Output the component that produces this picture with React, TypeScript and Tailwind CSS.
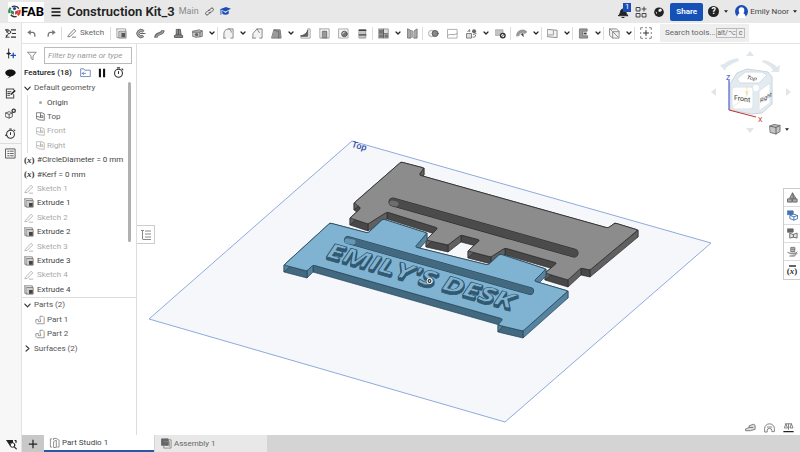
import React from 'react';

type Point = [number, number];

const Icon: React.FC<{ children: React.ReactNode; className?: string }> = ({ children, className = 'size-3' }) => (
  <svg
    viewBox="0 0 12 12"
    className={`shrink-0 ${className}`}
    fill="none"
    stroke="currentColor"
    strokeLinecap="round"
    strokeLinejoin="round"
    aria-hidden="true"
  >
    {children}
  </svg>
);

const toolIcons: Record<string, React.ReactNode> = {
  Extrude: (
    <>
      <path d="M1 1h9.500v2M1 1v9.500h2" stroke="#999" />
      <path d="M3.500 3.500H11V11H3.500z" fill="#c4c4c4" stroke="#888" />
      <path d="M6 5.500h4v4.500H6z" fill="#555" stroke="none" />
    </>
  ),
  Revolve: (
    <>
      <path d="M9.500 2.500A4.600 4.600 0 1 0 9.500 9.500L8 7.800A2.200 2.200 0 1 1 8 4.300z" fill="#aaa" stroke="#666" />
      <path d="M6 6h5" stroke="#555" />
    </>
  ),
  Sweep: (
    <>
      <path d="M2 10.500C2 4.500 9 8 10 2.500" stroke="#666" strokeWidth="3.600" strokeLinecap="butt" />
      <path d="M2.500 10C3 5 9 8 9.500 3" stroke="#999" strokeWidth="1.800" />
    </>
  ),
  Loft: <path d="M4 1.500h4l.8 6 1.700.8v2h-9v-2l1.700-.8zM3.200 7.500h5.600M6 2v5" fill="#8c8c8c" stroke="#555" />,
  Thicken: (
    <>
      <path d="M.7 3.500l7-1.500 3.500 1.200v6l-7 1L.7 9z" fill="#c4c4c4" stroke="#777" />
      <path d="M.7 4.500h8v5M9 4.500l2-1.300" stroke="#666" />
      <circle cx="5" cy="7.200" r="1.800" fill="#666" stroke="none" />
    </>
  ),
  Fillet: <path d="M1 11V6a5 5 0 0 1 5-5h5v10H8.500M1 11h2M6 1c2 0 3 1.500 3 3.500" stroke="#808080" fill="#f2f2f2" />,
  Chamfer: <path d="M1 11V6l4.500-5H11v10H8.500M1 11h3M5.500 1l2.500 4" stroke="#808080" fill="#f2f2f2" />,
  Draft: (
    <>
      <path d="M3.500 2h6.500l1 9H1z" fill="#999" stroke="#777" />
      <path d="M3.500 2 8.500 4v7" stroke="#666" />
    </>
  ),
  Rib: (
    <>
      <path d="M8.500 1H11v10H1V9h4" stroke="#999" />
      <path d="M1 8.500C5 8 8 5 8.500 2v7H3z" fill="#666" stroke="#555" />
    </>
  ),
  Shell: (
    <>
      <path d="M1 1h10v10H8.500M1 1v10h2" stroke="#999" />
      <path d="M4 3.500h4.500V11H4z" fill="#999" stroke="#666" />
    </>
  ),
  Hole: (
    <>
      <path d="M1 1h10v10H1z" fill="#f2f2f2" stroke="#aaa" />
      <circle cx="7" cy="6.500" r="3" fill="#777" stroke="#555" />
      <path d="M5 6.500a2 2 0 0 1 2-2" stroke="#ddd" />
    </>
  ),
  Thread: (
    <>
      <path d="M2.500 2h7v9h-7z" fill="#c4c4c4" stroke="#999" />
      <path d="M2.500 2.500h7M2.500 7.500h7" stroke="#444" strokeWidth="1.600" />
    </>
  ),
  Pattern: (
    <>
      <path d="M.7 1h10.500v10H.7z" fill="#ddd" stroke="#999" />
      <path d="M1 1.500h4.500v4H1zM1 7h4.500v3.500H1zM7 7h4v3.500H7z" fill="#777" stroke="none" />
      <path d="M6 1.500V10.500M1.500 6.300h9" stroke="#555" />
    </>
  ),
  Mirror: (
    <>
      <path d="M1 1 4.500 3v8H1zM8 3l3-2v10H8z" fill="#aaa" stroke="#777" />
      <path d="M4.500 3h1.500v7L8 11" stroke="#999" />
    </>
  ),
  Boolean: (
    <>
      <circle cx="4" cy="6" r="3.500" fill="#f2f2f2" stroke="#aaa" />
      <circle cx="7.800" cy="6" r="3.300" fill="#888" stroke="#555" />
    </>
  ),
  Split: (
    <>
      <path d="M1 1.500h10V11H1z" stroke="#aaa" />
      <path d="M1 8c3-2.500 5 1 10-2" stroke="#999" />
    </>
  ),
  Transform: (
    <>
      <path d="M2 4 4 1.500V4M1 6h5v5H1z" fill="#ddd" stroke="#777" />
      <circle cx="8.800" cy="3.500" r="2.200" fill="#666" stroke="none" />
      <path d="M8 7l3-1M7.500 10c1.500.5 3-.5 3-2" stroke="#666" />
    </>
  ),
  'Delete face': (
    <>
      <path d="M.7 2h8v6h-8z" fill="#c4c4c4" stroke="#aaa" />
      <circle cx="8.500" cy="8.300" r="2.500" fill="#fff" stroke="#333" strokeWidth="1.500" />
      <path d="M7 9.800l3-3" stroke="#333" />
    </>
  ),
  Surface: (
    <>
      <path d="M2 9A5 5 0 0 1 11 5.500" stroke="#999" strokeWidth="3.500" strokeLinecap="butt" />
      <path d="M5 6.500l3-1 .5 4.500z" fill="#444" stroke="none" />
    </>
  ),
  Plane: (
    <>
      <path d="M.7 1.500 11 2.500v8L.7 9.500z" fill="#f2f2f2" stroke="#888" />
      <path d="M1 7.500h6V3" stroke="#999" />
    </>
  ),
  'Sheet metal': (
    <>
      <path d="M2 1h8v2.500H5v5h5.500V11H2z" fill="#999" stroke="#777" />
      <path d="M6 5h3.500v2H6z" fill="#444" stroke="none" />
    </>
  ),
  Frame: (
    <>
      <path d="M1 1h7l3 2.500V11H4L1 8.500z" fill="#f2f2f2" stroke="#888" />
      <path d="M4 11V4h7M1 1l3 3 6 6" stroke="#888" />
    </>
  ),
};

// '|' is a divider, 'v' opens the flyout of the tool before it
const toolbar = [
  'Extrude', 'Revolve', 'Sweep', 'Loft', 'Thicken', 'v', '|',
  'Fillet', 'v', 'Chamfer', 'Draft', 'v', 'Rib', 'Shell', 'Hole', 'Thread', '|',
  'Pattern', 'v', 'Mirror', '|',
  'Boolean', 'Split', 'Transform', 'v', 'Delete face', '|',
  'Surface', 'v', '|', 'Plane', 'v', '|', 'Sheet metal', 'v', '|', 'Frame', 'v', '|',
];

const PencilIcon = () => (
  <Icon className="size-[10px]">
    <path d="M2 8.500 8.500 1.500l2 2L4 10l-2.500.5zM6.500 11h4" stroke="currentColor" />
  </Icon>
);

const ExtrudeIcon = () => (
  <Icon className="size-[10px]">
    <path d="M1 1h9v2M1 1v9h2" stroke="#777" />
    <path d="M3 3h8v8H3z" fill="#ccc" stroke="#777" />
    <path d="M6 6h4.500v4.500H6z" fill="#444" stroke="none" />
  </Icon>
);

const PlaneIcon = () => (
  <Icon className="size-[9px]">
    <path d="M1 1h7l3 1.500V11L4 10.500 1 9zM1 6l5 1V2M6 7l3 .5V5H6" />
  </Icon>
);

const VariableIcon = () => (
  <span className="font-['Liberation_Serif',serif] text-[9px] leading-none font-bold text-[#333]">
    (<i>x</i>)
  </span>
);

const PartIcon = () => (
  <Icon className="size-[10px]">
    <path d="M6 4V1.500h3.500l1.500 1.500v7.500H2.500L1 9V5.500h3V8h2.500z" stroke="#888" />
  </Icon>
);

const Chevron: React.FC<{ open?: boolean }> = ({ open = true }) => (
  <Icon className="size-[7px]">
    <path d={open ? 'M1.500 3.500 6 8.500l4.500-5' : 'M3.500 1.500l5 4.500-5 4.500'} stroke="#333" strokeWidth="2" />
  </Icon>
);

const features = [
  { kind: 'variable', label: '#CircleDiameter = 0 mm' },
  { kind: 'variable', label: '#Kerf = 0 mm' },
  { kind: 'sketch', label: 'Sketch 1' },
  { kind: 'extrude', label: 'Extrude 1' },
  { kind: 'sketch', label: 'Sketch 2' },
  { kind: 'extrude', label: 'Extrude 2' },
  { kind: 'sketch', label: 'Sketch 3' },
  { kind: 'extrude', label: 'Extrude 3' },
  { kind: 'sketch', label: 'Sketch 4' },
  { kind: 'extrude', label: 'Extrude 4' },
];

const Header = () => (
  <header className="flex h-[23px] shrink-0 items-center bg-[#e8e8e8] pl-2 text-[#222]">
    <a href="#home" className="flex h-5 w-9 items-center bg-white" aria-label="FAB home">
      <svg viewBox="0 0 24 24" className="size-[13px] shrink-0" fill="none" strokeWidth="4">
        <path d="M3 15A9.500 9.500 0 0 1 5 5" stroke="#2d8a57" />
        <path d="M7 3.500a10 10 0 0 1 13 3" stroke="#333" strokeWidth="2.500" />
        <path d="M21 9a9.500 9.500 0 0 1-3 10" stroke="#d33a3a" />
        <path d="M16 21a10 10 0 0 1-11-3" stroke="#333" strokeWidth="2.500" />
        <path d="M5 9l6 3v6l-6-3z" fill="#2d8a57" />
        <path d="M13 12l6-3v6l-6 3z" fill="#d33a3a" />
        <circle cx="12" cy="6.500" r="3" fill="#2b4f9c" />
      </svg>
      <span className="text-[13px] leading-none font-bold text-black">FAB</span>
    </a>
    <button className="ml-[6px]" aria-label="Menu">
      <Icon>
        <path d="M1.500 2.500h9M1.500 6h9M1.500 9.500h9" stroke="#111" strokeWidth="1.400" strokeLinecap="butt" />
      </Icon>
    </button>
    <h1 className="ml-[5px] text-[13px] leading-none font-semibold whitespace-nowrap">Construction Kit_3</h1>
    <span className="ml-1 text-[9px] text-[#888]">Main</span>
    <button className="ml-[6px]" aria-label="Copy link">
      <Icon className="size-[9px]">
        <path d="M5.500 8.500 4 10.300a2 2 0 0 1-2.800-2.800L4 4.700a2 2 0 0 1 2.800 0M6.500 3.500 8 1.700a2 2 0 0 1 2.800 2.800L8 7.300a2 2 0 0 1-2.800 0" stroke="#555" strokeWidth="1.300" />
      </Icon>
    </button>
    <button className="ml-[6px]" aria-label="Learning center">
      <Icon className="size-[11px]">
        <path d="M0 3.500 6.500 1 12 3 6 6z" fill="#1b4db8" stroke="none" />
        <path d="M2.500 5 6 7.500 9.500 5v3.500c-2 1.500-5 1.500-7 0z" fill="#1b4db8" stroke="none" />
        <path d="M1 4v5" stroke="#1b4db8" />
      </Icon>
    </button>

    <div className="ml-auto flex items-center">
      <button className="relative" aria-label="1 notification">
        <Icon>
          <path d="M1.500 9.500c1.500-1 1.500-2 2-4 .4-1.600 1.200-2.500 2.700-2.500S8.500 4 8.800 5.500c.4 2 .6 3 2 4z" fill="#222" stroke="#222" />
          <path d="M5 11.500h2" stroke="#222" />
        </Icon>
        <span className="absolute -top-[3px] left-[6px] flex h-[9px] w-2 items-center justify-center bg-[#1b4db8] text-[8px] leading-none text-white">1</span>
      </button>
      <button className="ml-[6px]" aria-label="App store">
        <Icon>
          <path d="M1.500 1.500h3.500v3.500H1.500zM1.500 7.500h3.500V11H1.500zM7.500 7.500H11V11H7.500zM9 1v4M7 3h4" stroke="#444" />
        </Icon>
      </button>
      <button className="ml-[6px]" aria-label="Public document">
        <Icon>
          <circle cx="6" cy="6.200" r="4.800" fill="#222" stroke="none" />
          <path d="M5.500 3.500 8 2.500l1 2-2 1.500-1.500-.5zM2.500 5.500l1.500 1v2z" fill="#eee" stroke="none" />
        </Icon>
      </button>
      <button className="ml-[5px] h-[18px] w-[33px] rounded-[2px] bg-[#1651b8] text-[8px] font-semibold text-white">Share</button>
      <button className="ml-[5px] flex items-center gap-[5px]" aria-label="Help">
        <span className="flex size-[11px] items-center justify-center rounded-full bg-[#222] text-[9px] leading-none font-bold text-white">?</span>
        <Caret />
      </button>
      <button className="ml-[7px] flex items-center pr-[3px] text-[8px] text-[#444]">
        <svg viewBox="0 0 14 14" className="mr-[2px] size-[13px]" aria-hidden="true">
          <circle cx="7" cy="7" r="7" fill="#1b4db8" />
          <path d="M7 2.500A3.200 3.200 0 0 0 4 6c0 1.500.5 2.500 1 3-1.500.5-2.500 2-2.500 5h9c0-3-1-4.500-2.500-5 .5-.5 1-1.500 1-3a3.200 3.200 0 0 0-3-3.500z" fill="#fff" />
        </svg>
        <span className="mr-1 whitespace-nowrap">Emily Noor</span>
        <Caret />
      </button>
    </div>
  </header>
);

const Caret = () => (
  <svg viewBox="0 0 6 4" className="h-[3px] w-1" aria-hidden="true">
    <path d="M0 0h6L3 4z" fill="#222" />
  </svg>
);

const Toolbar = () => (
  <div className="flex h-[21px] shrink-0 items-center border-b border-[#e4e4e4] bg-white text-[#666]">
    <button className="ml-1 flex w-[11px] justify-center" aria-label="Undo">
      <Icon className="size-[9px]">
        <path d="M5 1 .5 4.500 5 8z" fill="#777" stroke="none" />
        <path d="M2 4.500h5.500C9.500 4.500 10.500 6 10.500 9.500" stroke="#777" strokeWidth="1.800" />
      </Icon>
    </button>
    <button className="ml-[9px] flex w-[11px] justify-center" aria-label="Redo">
      <Icon className="size-[9px]">
        <path d="M7 1l4.500 3.500L7 8z" fill="#777" stroke="none" />
        <path d="M10 4.500H4.500C2.500 4.500 1.500 6 1.500 9.500" stroke="#777" strokeWidth="1.800" />
      </Icon>
    </button>
    <span className="ml-1 h-[13px] w-px bg-[#ddd]" />
    <button className="ml-[5px] flex w-[43px] items-center gap-[3px] text-[8px]">
      <PencilIcon />
      Sketch
    </button>
    <span className="mr-px h-[13px] w-px bg-[#ddd]" />
    {toolbar.map((item, i) => {
      if (item === '|') return <span key={i} className="mr-px h-[13px] w-px shrink-0 bg-[#ddd]" />;
      if (item === 'v') {
        return (
          <button key={i} className="flex w-[10px] shrink-0 items-center justify-center" aria-label={`More ${toolbar[i - 1]} tools`}>
            <Icon className="size-[6px]">
              <path d="M2 4l4 4 4-4" stroke="#222" strokeWidth="2.500" />
            </Icon>
          </button>
        );
      }
      return (
        <button key={i} className="flex w-[19px] shrink-0 justify-center" aria-label={item}>
          <Icon className="size-[11px]">{toolIcons[item]}</Icon>
        </button>
      );
    })}
    <button className="flex w-[19px] shrink-0 justify-center" aria-label="Add custom feature">
      <Icon>
        <path d="M.7 3V.7H3M9 .7h2.300V3M11.300 9v2.300H9M3 11.300H.7V9M5 .7h2M5 11.300h2M.7 5v2M11.300 5v2" stroke="#888" strokeLinecap="butt" />
        <path d="M6 3.500v5M3.500 6h5" stroke="#333" />
      </Icon>
    </button>
    <label className="ml-[5px] flex h-[18px] w-[89px] shrink-0 items-center bg-[#efefef] pr-1 pl-[5px]">
      <input className="w-0 min-w-0 flex-1 text-[8px] outline-none placeholder:text-[#666]" placeholder="Search tools..." aria-label="Search tools" />
      <kbd className="flex h-[10px] w-[21px] items-center justify-center border border-[#bbb] font-[inherit] text-[7px] leading-none">alt/⌥</kbd>
      <kbd className="flex h-[10px] w-2 items-center justify-center border border-l-0 border-[#bbb] font-[inherit] text-[7px] leading-none">c</kbd>
    </label>
  </div>
);

const railIcons = [
  {
    label: 'Features',
    art: (
      <>
        <path d="M0 2h4M2 2v3M6.500 2H12M7.500 6H12M6.500 10H12" stroke="#333" strokeLinecap="butt" strokeWidth="1.200" />
        <circle cx="4.500" cy="4.500" r="1.700" stroke="#333" />
        <path d="M3.500 6.500 1 10.500M4.500 10h-3V8" stroke="#333" />
      </>
    ),
  },
  {
    label: 'Insert',
    art: (
      <>
        <path d="M4 1v10M2 6h4" stroke="#222" />
        <circle cx="4" cy="6" r="1.500" fill="#222" stroke="none" />
        <path d="M9 5.500v5M6.500 8h5" stroke="#1b4db8" strokeWidth="1.400" />
      </>
    ),
  },
  { label: 'Comments', art: <path d="M6 1.500C3 1.500.3 3 .3 5.300S3 9 5 9l-2.500 2.500L7 9c2.500-.5 4.700-2 4.700-3.700C11.700 3 9 1.500 6 1.500z" fill="#111" stroke="none" /> },
  {
    label: 'Release notes',
    art: (
      <>
        <path d="M9.500 7v4H1.500V1h8v1M3 4h3.500M3 6h2.500M3 8h2" stroke="#444" strokeWidth="1.100" />
        <path d="M6 8l.5-2 4-4 1.200 1.200-4 4z" fill="#222" stroke="none" />
      </>
    ),
  },
  {
    label: 'Configurations',
    art: (
      <>
        <path d="M.7 5.500 4.500 4 8 5.500v4L4.500 11 .7 9.500zM.7 5.500 4.500 7 8 5.500M4.500 7v4" stroke="#555" />
        <circle cx="9.500" cy="3" r="1.800" stroke="#333" strokeWidth="1.400" />
      </>
    ),
  },
  {
    label: 'History',
    art: (
      <>
        <circle cx="6" cy="6.800" r="4.300" stroke="#333" strokeWidth="1.100" />
        <path d="M6 7V5M5 1h2M9.800 2l1 1M0 8h2" stroke="#333" strokeWidth="1.100" />
      </>
    ),
  },
];

const Rail = () => (
  <nav className="flex w-[22px] shrink-0 flex-col items-center border-r border-[#e2e2e2] bg-[#f7f7f7]">
    {railIcons.map(item => (
      <button key={item.label} className="flex h-5 w-full items-center justify-center" aria-label={item.label}>
        <Icon className="size-[11px]">{item.art}</Icon>
      </button>
    ))}
    <button className="flex h-5 w-full items-center justify-center border-t border-[#ddd]" aria-label="Tables">
      <Icon className="size-[11px]">
        <path d="M1 1h10v10H1zM3 3.500h1.500M6 3.500h3M3 6h1.500M6 6h3M3 8.500h1.500M6 8.500h3" stroke="#555" />
      </Icon>
    </button>
    <button className="mt-auto flex h-[17px] items-center justify-center" aria-label="Search tabs">
      <Icon>
        <path d="M1 2h7v3H5v3z" fill="#222" stroke="none" />
        <circle cx="7.500" cy="7" r="2.300" fill="#fff" stroke="#222" />
        <path d="M9.300 8.800l2 2M10 2.500h1v2" stroke="#222" strokeWidth="1.200" />
      </Icon>
    </button>
  </nav>
);

const FeaturePanel = () => (
  <aside className="flex w-[115px] shrink-0 flex-col border-r border-[#ddd] bg-white text-[8px] leading-none text-[#444]">
    <div className="mt-[3px] flex h-[17px] items-center">
      <button className="ml-[5px]" aria-label="Filter options">
        <Icon className="size-[10px]">
          <path d="M1 1.500h10L7.200 6v4.500L4.800 9V6z" stroke="#777" />
        </Icon>
      </button>
      <input
        className="ml-[7px] h-[17px] w-[88px] border border-[#bbb] px-[3px] text-[8px] italic outline-none placeholder:text-[#999]"
        placeholder="Filter by name or type"
        aria-label="Filter by name or type"
      />
    </div>
    <div className="flex h-[17px] items-center pl-[2px]">
      <h2 className="w-[54px] font-medium whitespace-nowrap text-[#222]">Features (18)</h2>
      <button className="ml-[2px]" aria-label="Add folder">
        <Icon className="size-[11px]">
          <path d="M.7 10V2h3.500l1 1.500h6V10zM6 7H2.500M4 5.500 2.500 7 4 8.500" stroke="#6f86c2" />
        </Icon>
      </button>
      <button className="ml-[6px]" aria-label="Pause regeneration">
        <Icon className="size-[10px]">
          <path d="M3.500 1v10M8.500 1v10" stroke="#111" strokeWidth="2.500" strokeLinecap="butt" />
        </Icon>
      </button>
      <button className="ml-[6px]" aria-label="Regeneration times">
        <Icon className="size-[11px]">
          <circle cx="6" cy="6.800" r="4.300" stroke="#333" strokeWidth="1.200" />
          <path d="M6 7V5M4.800 1h2.400M9.800 2l1 1" stroke="#333" strokeWidth="1.200" />
        </Icon>
      </button>
    </div>
    <div className="relative border-b border-[#ddd]">
      <ul className="grid h-[216px] auto-rows-fr items-center whitespace-nowrap">
        <li className="flex items-center gap-[3px] pl-[2px] text-[#555]">
          <Chevron /> Default geometry
        </li>
        <li className="ml-[5px] flex h-full items-center border-l border-[#ddd] pl-[10px]">
          <span className="mr-[5px] ml-px size-[3px] rounded-full bg-[#aaa]" />
          Origin
        </li>
        {['Top', 'Front', 'Right'].map(name => (
          <li key={name} className="ml-[5px] flex h-full items-center border-l border-[#ddd] pl-[8px]">
            <span className={`flex items-center gap-[2px] ${name === 'Top' ? 'text-[#555]' : 'text-[#aaa]'}`}>
              <PlaneIcon /> {name}
            </span>
          </li>
        ))}
        {features.map(feature => (
          <li key={feature.label} className={`flex items-center pl-[2px] ${feature.kind === 'sketch' ? 'text-[#aaa]' : 'text-[#444]'}`}>
            <span className="flex w-[13px] items-center">
              {feature.kind === 'variable' && <VariableIcon />}
              {feature.kind === 'sketch' && <PencilIcon />}
              {feature.kind === 'extrude' && <ExtrudeIcon />}
            </span>
            {feature.label}
          </li>
        ))}
      </ul>
      <div className="absolute top-px right-[5px] h-[160px] w-[3px] rounded-full bg-[#b0b0b0]" />
    </div>
    <ul className="grid h-[58px] auto-rows-fr items-center text-[#555]">
      <li className="flex items-center gap-[3px] pl-[2px]">
        <Chevron /> Parts (2)
      </li>
      <li className="flex items-center gap-[2px] pl-[13px]">
        <PartIcon /> Part 1
      </li>
      <li className="flex items-center gap-[2px] pl-[13px]">
        <PartIcon /> Part 2
      </li>
      <li className="flex items-center gap-[3px] pl-[2px]">
        <Chevron open={false} /> Surfaces (2)
      </li>
    </ul>
  </aside>
);

const grayOutline: Point[] = [
  [401, 162], [424, 168], [419, 175], [608, 228], [615, 223], [638, 230], [590, 270], [581, 268],
  [568, 280], [545, 273], [557, 263], [505, 248], [491, 257], [468, 251], [480, 240], [461, 235],
  [448, 245], [426, 240], [438, 228], [387, 212], [368, 224], [350, 218], [361, 208], [354, 203],
];

const blueOutline: Point[] = [
  [330, 223], [368, 233], [383, 219], [427, 233], [415, 247], [488, 265], [500, 254], [546, 269],
  [534, 281], [568, 291], [523, 331], [498, 325], [503, 319], [313, 265], [307, 271], [284, 265],
];

// Closed path through the points with each corner eased by r
const roundedPath = (points: Point[], r: number) =>
  points
    .map((p, i) => {
      const prev = points[(i + points.length - 1) % points.length];
      const next = points[(i + 1) % points.length];
      const toward = (q: Point) => {
        const d = Math.hypot(q[0] - p[0], q[1] - p[1]);
        return `${p[0] + ((q[0] - p[0]) * r) / d} ${p[1] + ((q[1] - p[1]) * r) / d}`;
      };
      return `${i ? 'L' : 'M'}${toward(prev)}Q${p[0]} ${p[1]} ${toward(next)}`;
    })
    .join('') + 'Z';

const Plate: React.FC<{
  outline: Point[];
  depth: number;
  face: string;
  front: string;
  side: string;
  edge: string;
}> = ({ outline, depth, face, front, side, edge }) => (
  <g strokeLinejoin="round">
    {outline.map((a, i) => {
      const b = outline[(i + 1) % outline.length];
      const isFront = (b[0] - a[0]) * (b[1] - a[1]) > 0;
      return (
        <path
          key={i}
          d={`M${a[0]} ${a[1]}L${b[0]} ${b[1]}v${depth}L${a[0]} ${a[1] + depth}Z`}
          fill={isFront ? front : side}
          stroke={edge}
          strokeWidth="0.7"
        />
      );
    })}
    <path d={roundedPath(outline, 2)} fill={face} stroke={edge} strokeWidth="0.8" />
  </g>
);

const lettering = 'matrix(.97 .273 -.42 .63 324';

const Model = () => (
  <svg viewBox="137 44 663 391" className="block h-full w-full" role="img" aria-label="Name plate model">
    <path d="M352 141 711 243 505 422 149 319z" fill="#f5f7fb" stroke="#8eaadb" />
    <text transform="matrix(.97 .26 -.3 .95 351 147)" fontSize="9" fontWeight="500" fill="#2f4fa8">Top</text>

    <Plate outline={grayOutline} depth={7} face="#8c8c8c" front="#484848" side="#606060" edge="#2b2b2b" />
    <path d="M393 202 574 253" stroke="#2b2b2b" strokeWidth="9" strokeLinecap="round" />
    <path d="M393 202 574 253" stroke="#4b4b4b" strokeWidth="8" strokeLinecap="round" />
    <path d="M392 203 396 204" stroke="#6e6e6e" strokeWidth="5" strokeLinecap="round" />

    <Plate outline={blueOutline} depth={7} face="#80b2d1" front="#42697f" side="#5583a0" edge="#234559" />
    <path d="M348 240 530 291" stroke="#234559" strokeWidth="8" strokeLinecap="round" />
    <path d="M348 240 530 291" stroke="#42697f" strokeWidth="7" strokeLinecap="round" />
    <path d="M347 241 353 242" stroke="#6597b5" strokeWidth="5" strokeLinecap="round" />

    <g fontSize="29" fontWeight="700" className="font-['Open_Sans',sans-serif]" strokeLinejoin="round">
      {[3, 2, 1].map(z => (
        <text key={z} transform={`${lettering} ${256 + z})`} fill="#3a647c" stroke="#2f566d">
          EMILY'S DESK
        </text>
      ))}
      <text transform={`${lettering} 256)`} fill="#80b2d1" stroke="#234559" strokeWidth="0.700">
        EMILY'S DESK
      </text>
    </g>
    <circle cx="429.500" cy="281" r="2.500" fill="#333" stroke="#fff" />
    <circle cx="429.500" cy="281" r="0.800" fill="#fff" />
  </svg>
);

const ViewCube = () => (
  <svg viewBox="0 0 96 96" className="size-24" role="img" aria-label="View cube">
    <g fill="#dfe6ec">
      <path d="M44 12l4-5 4 5zM44 84l4 5 4-5zM14 44l-5 4 5 4zM84 44l5 4-5 4z" />
      <path d="M18 21l5 6 1-3c3-3 7-5 13-7l-1-3c-6 1-11 3-14 6zM78 21l-1 7-8 0 2-2c-3-4-6-6-11-8l1-2c6 1 11 4 14 7z" />
    </g>
    <path d="M28 40 35 29 45 25 66 28 70 33V60L60 69 50 70 28 66z" fill="#e3ebf0" stroke="#c9d4dc" strokeLinejoin="round" />
    <path d="M35 35l8-7h17l5 3-8 8H38z" fill="#fff" stroke="#d3dce3" strokeLinejoin="round" />
    <rect x="30" y="43" width="21" height="22" rx="3" fill="#fff" stroke="#dde4ea" />
    <path d="M57 47l11-8v20l-11 8z" fill="#fff" stroke="#dde4ea" strokeLinejoin="round" />
    <circle cx="54" cy="44" r="3" fill="#fff" />
    <path d="M27 66 45 52V42" stroke="#e8dba5" strokeWidth="0.600" fill="none" />
    <path d="M27 66V36" stroke="#2b3fc4" />
    <path d="M27 66l27 7" stroke="#c43030" />
    <g fontSize="7" fill="#333">
      <text x="24" y="36" fill="#2b3fc4">Z</text>
      <text x="56" y="78" fill="#c43030">X</text>
      <text x="43" y="51" fontSize="6" fill="#e3cf7a">Y</text>
      <text transform="matrix(1 .14 0 1 32 56)">Front</text>
      <text transform="matrix(.85 -.5 0 1 58 59)" fontSize="6">Right</text>
      <text transform="matrix(1 .15 -.4 .8 44 35)" fontSize="6">Top</text>
    </g>
  </svg>
);

const sideTools = [
  { label: 'Appearance', color: 'text-[#666]', art: <path d="M3 6.500 6 1l3.500 5.500zM1 7.500h4.500V11H1zM6.500 7.500H11V11H6.500zM6 1l1 5.500" fill="#aaa" /> },
  { label: 'Display states', color: 'text-[#4672b5]', art: <><path d="M.7 1h6v4h-6z" fill="#4672b5" /><path d="M3.500 6 7.500 4.500l4 1.500v3.500l-4 1.500-4-1.500zM3.500 6l4 1.500 4-1.500M7.500 7.500V11" fill="#fff" /></> },
  { label: 'Configuration', color: 'text-[#666]', art: <><path d="M.7 1h6v3.500h-6z" fill="#666" /><path d="M3 6v5l4-1 4 1V5.500L7 7zM7 7v3" fill="#e4e4e4" /></> },
  { label: 'Simulation', color: 'text-[#777]', art: <path d="M4.500 1.500h4V6h-4zM1 7l3 1.500h5L11 6.500M3 11h5l3-3M4.500 3.500h4" fill="#bbb" /> },
];

const Workspace = () => (
  <main className="relative min-w-0 flex-1 bg-white">
    <Model />
    <button className="absolute top-[181px] left-0 flex h-[19px] w-[18px] items-center justify-center border border-l-0 border-[#ccc] bg-white" aria-label="Collapse feature list">
      <Icon>
        <path d="M1 1.500h3M2.500 1.500v9M5 2h6M5 5h6M5 8h6M3 10.500h8" stroke="#888" strokeLinecap="butt" />
      </Icon>
    </button>
    <div className="absolute top-0 right-[2px]">
      <ViewCube />
    </div>
    <button className="absolute top-[79px] right-[11px] flex items-center gap-1" aria-label="View options">
      <Icon>
        <path d="M1 3l4-1.500 6 1v6L7 11 1.500 9.500z" fill="#c4c4c4" stroke="#777" />
        <path d="M1 3l6 1.500V11M7 4.500l4-2" stroke="#666" />
      </Icon>
      <Caret />
    </button>
    <div className="absolute top-[144px] right-0 flex w-[17px] flex-col border border-r-0 border-[#ccc] bg-white">
      {sideTools.map(tool => (
        <button key={tool.label} className={`flex h-[18px] items-center justify-center border-b border-[#ddd] ${tool.color}`} aria-label={tool.label}>
          <Icon className="size-[11px]">{tool.art}</Icon>
        </button>
      ))}
      <button className="flex h-[18px] flex-col items-center justify-center" aria-label="Variable table">
        <span className="h-[2px] w-[7px] bg-[#666]" />
        <VariableIcon />
      </button>
    </div>
    <div className="absolute right-[6px] bottom-[2px] flex gap-2 text-[#777]">
      <button aria-label="Measure">
        <Icon className="size-[11px]">
          <path d="M1 7.500 4.500 6V4l5-1.500 1.500 1V8L6 9.500H1zM4.500 6h4" fill="#ddd" />
        </Icon>
      </button>
      <button aria-label="Mass properties">
        <Icon className="size-[11px]">
          <path d="M.7 10.500V7a5.300 5 0 0 1 10.600 0v3.500H8.500V9a2.500 2 0 0 0-5 0v1.500zM3.500 5.500l5 0" />
        </Icon>
      </button>
      <button aria-label="Analysis">
        <Icon className="size-[11px]">
          <path d="M2.500 2h7M6 2v6M3 2.500 1.500 6.500h3zM9 2.500 7.500 6.500h3z" />
          <path d="M1 10.500h10" stroke="#222" strokeWidth="1.500" />
        </Icon>
      </button>
    </div>
  </main>
);

const Tabs = () => (
  <footer className="flex h-[17px] shrink-0 bg-[#d4d4d4] text-[8px] leading-none text-[#444]">
    <button className="flex w-[22px] items-center justify-center bg-[#c8c8c8]" aria-label="Insert new element">
      <Icon className="size-[10px]">
        <path d="M6 1v10M1 6h10" stroke="#222" strokeWidth="1.500" strokeLinecap="butt" />
      </Icon>
    </button>
    <button className="flex w-[110px] items-center gap-[2px] border-b-2 border-[#2c56a8] bg-white pl-[5px]">
      <Icon className="size-[11px]">
        <path d="M3 2H1.500v9H3M5 11V5L8 3.500V11zM5 3V1.500h3l3 2V11H9.500" stroke="#888" />
      </Icon>
      Part Studio 1
    </button>
    <button className="ml-px flex w-[112px] items-center gap-[2px] bg-[#e8e8e8] pl-[6px] text-[#666]">
      <Icon className="size-[11px]">
        <path d="M1 1h7v7H1z" fill="#666" stroke="#666" />
        <path d="M8 2h3v9H3V8M4 4h5v5" stroke="#888" />
      </Icon>
      Assembly 1
    </button>
  </footer>
);

const App: React.FC = () => (
  <div className="flex h-screen flex-col overflow-hidden bg-white font-[Roboto,sans-serif]">
    <Header />
    <div className="flex min-h-0 flex-1">
      <Rail />
      <div className="flex min-w-0 flex-1 flex-col">
        <Toolbar />
        <div className="flex min-h-0 flex-1">
          <FeaturePanel />
          <Workspace />
        </div>
        <Tabs />
      </div>
    </div>
  </div>
);

export default App;
